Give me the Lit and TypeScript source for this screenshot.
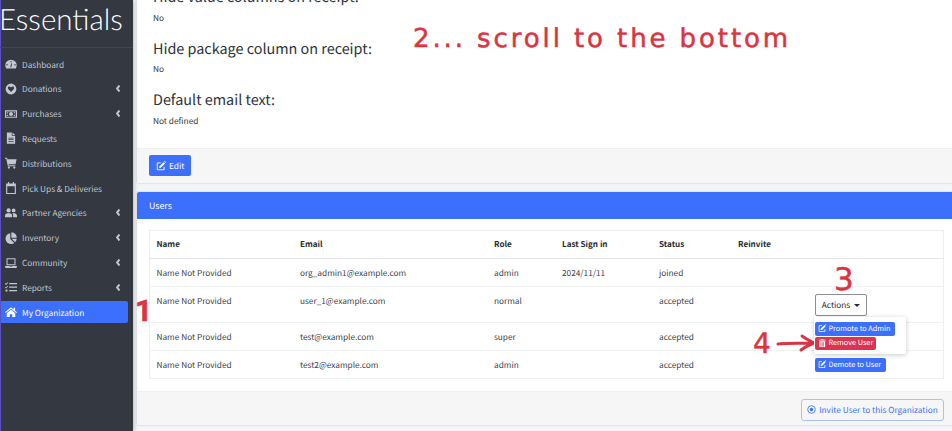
import { LitElement, html, css, svg } from "lit";
import { customElement } from "lit/decorators.js";

const ic: Record<string, any> = {
  dash: svg`<path fill-rule="evenodd" d="M8 2.2a7.6 7.6 0 0 0-7.6 7.6c0 1.4.4 2.7 1 3.8.2.3.4.4.7.4h11.800c.3 0 .5-.1.7-.4.6-1.100 1-2.400 1-3.800A7.600 7.600 0 0 0 8 2.200zM8 4a.9.9 0 1 1 0 1.800A.9.9 0 0 1 8 4zM3.500 9.100a.9.9 0 1 1 0-.1zm9.900-1a.9.9 0 1 1 0 1.800.9.9 0 0 1 0-1.800zM7 12.300 8.300 7l1 .2-.9 5.100a1.500 1.500 0 0 1-1.400 0z"/>`,
  heart: svg`<path fill-rule="evenodd" d="M8 .8a7.200 7.200 0 1 0 0 14.400A7.200 7.200 0 0 0 8 .8zM8 12 4.600 8.400c-1-1-1-2.600 0-3.400.9-.7 2.100-.5 2.800.3l.6.600.6-.6c.7-.8 1.900-1 2.800-.3 1 .8 1 2.400 0 3.400z"/>`,
  money: svg`<path fill-rule="evenodd" d="M0 3h16v10H0zm1.500 1.500v7h13v-7zM8 5.300a2.700 2.700 0 1 1 0 5.400 2.700 2.700 0 0 1 0-5.400zM2.500 5.500h2c0 1-.9 2-2 2zm9 0h2v2c-1.100 0-2-1-2-2zm-9 3c1.100 0 2 1 2 2h-2zm11 0v2h-2c0-1 .9-2 2-2z"/>`,
  file: svg`<path fill-rule="evenodd" d="M2.500 0.500h6.500v4.500h4.500v10.500h-11zM10 .5l3.500 3.500H10zM4.500 7.500v1h7v-1zm0 2.300v1h7v-1zm0 2.300v1h7v-1z"/>`,
  cart: svg`<path d="M0 1h2.800l.4 2h12.300l-1.500 6.600H4.600l.3 1.400h8.800v1.300H3.800L1.700 2.300H0z"/><circle cx="5.200" cy="14" r="1.500"/><circle cx="12.400" cy="14" r="1.500"/>`,
  cal: svg`<path fill-rule="evenodd" d="M4 0h1.500v2h5V0H12v2h2.500v14h-13V2H4zM3 5.500v9h10v-9z"/>`,
  users: svg`<circle cx="4.800" cy="4.500" r="2.800"/><circle cx="11.500" cy="4.500" r="2.500"/><path d="M0 13.500v-1.800C0 9.600 1.500 8.300 3.500 8.300h2.600c2 0 3.400 1.300 3.400 3.400v1.800zM10.800 13.500v-2.200c0-1.200-.4-2.200-1.200-3 .5-.1 1-.1 1.500-.1h1.200c2 0 3.700 1.200 3.700 3.200v2.100z"/>`,
  pie: svg`<path d="M7 1.500v7.700l5.400 5.400A7.300 7.300 0 1 1 7 1.500z"/><path d="M8.500.3A7.300 7.300 0 0 1 15.700 7.500H8.500z"/><path d="M9 9h6.700a7.300 7.300 0 0 1-2.200 4.500z"/>`,
  laptop: svg`<path fill-rule="evenodd" d="M2 1.500h12V11H2zm1.400 1.400v6.700h9.200V2.900zM0 12h6l.5.7h3l.5-.7h6v1c0 .8-.6 1.500-1.500 1.500h-13C.6 14.500 0 13.800 0 13z"/>`,
  tasks: svg`<path d="M5.500 2.500H16v1.800H5.500zM5.500 7.200H16V9H5.500zM5.500 11.900H16v1.800H5.500z"/><path d="M.5 2.800l1 1 2-2.300.8.700-2.800 3.200-1.800-1.700zM.5 7.500l1 1 2-2.300.8.700-2.800 3.200-1.800-1.700z"/><circle cx="2" cy="12.800" r="1.500"/>`,
  home: svg`<path d="M8 1.500 0 8.300l.9 1.100L8 3.500l7.100 5.900.9-1.100-2.500-2.100V2.300h-2v2.300z"/><path d="M2.300 9.800 8 5l5.700 4.800v4.700H9.700v-3.500H6.300v3.500h-4z"/>`,
};
const edit = svg`<path fill="none" stroke="currentColor" stroke-width="1.500" d="M13 9.500V14H2V3h5.500"/><path fill="currentColor" d="M5.500 8.500 12.200 1.800l2.300 2.300-6.700 6.700-2.800.5zM13 1l.6-.5c.3-.2.7-.2 1 0l1 1c.2.300.2.700 0 1l-.5.500z"/>`;
const trash = svg`<path fill="currentColor" fill-rule="evenodd" d="M5.500 0h5l.5 1.500h3.500V3h-13V1.500H5zM2.500 4h11v12h-11zM5 6v8h1.200V6zm2.400 0v8h1.200V6zm2.400 0v8H11V6z"/>`;
const circle = svg`<circle cx="8" cy="8" r="6.800" fill="none" stroke="currentColor" stroke-width="1.500"/><circle cx="8" cy="8" r="3" fill="currentColor"/>`;

const nav = [
  ["dash", "Dashboard", 0], ["heart", "Donations", 1], ["money", "Purchases", 1], ["file", "Requests", 0],
  ["cart", "Distributions", 0], ["cal", "Pick Ups & Deliveries", 0], ["users", "Partner Agencies", 1],
  ["pie", "Inventory", 1], ["laptop", "Community", 1], ["tasks", "Reports", 1], ["home", "My Organization", 0],
] as const;

const rows = [
  ["org_admin1@example.com", "admin", "2024/11/11", "joined", ""],
  ["user_1@example.com", "normal", "", "accepted", "actions"],
  ["test@example.com", "super", "", "accepted", ""],
  ["test2@example.com", "admin", "", "accepted", "demote"],
];

@customElement("app-root")
export class AppRoot extends LitElement {
  static styles = css`
    :host { display: block; width: 952px; height: 431px; overflow: hidden; position: relative; background: #f3f5f9;
      font-family: "Noto Sans CJK SC", "Noto Sans", sans-serif; font-size: 8.250px; color: #343a40; text-rendering: geometricPrecision; }
    .page { display: grid; grid-template-columns: 133px 1fr; height: 431px; }
    .side { background: #343840; border-left: 1px solid #5a50c2; color: #c2c7d0; box-sizing: border-box; position: relative; z-index: 1; box-shadow: 1px 0 4px rgba(0,0,0,.25); }
    .logo { height: 47px; border-bottom: 1px solid #41464e; color: #fff; font-family: "Lato", sans-serif;
      font-weight: 300; font-size: 29.500px; line-height: 40px; margin-left: -2px; overflow: hidden; }
    .nav { padding-top: 5px; display: flex; flex-direction: column; gap: 2.830px; }
    .item { height: 22px; width: 127px; display: flex; align-items: center; gap: 5px; padding: 0 8px 0 4px; box-sizing: border-box; border-radius: 0 2px 2px 0; }
    .item span { padding-top: 1px; }
    .item svg.i { width: 12px; height: 12px; flex: none; fill: #c2c7d0; }
    .item .c { margin-left: auto; margin-right: 0; width: 4px; height: 7px; fill: none; stroke: #c2c7d0; stroke-width: 2; }
    .item.on { background: #3c6ffb; color: #fff; }
    .item.on svg.i { fill: #fff; }
    .main { padding-left: 4px; min-width: 0; overflow: hidden; display: flex; flex-direction: column; }
    .card { background: #fff; box-shadow: 0 0 2px rgba(0,0,0,.2); }
    .top { margin-top: -13px; }
    .body { padding: 0 16px 6px; }
    .field { height: 51.500px; }
    .field h4 { margin: 0; font-weight: 400; font-size: 14.400px; line-height: 20px; color: #2c3238; }
    .field p { margin: 4.500px 0 0; line-height: 12px; font-size: 8.300px; color: #333; }
    .foot { background: #f6f6f6; border-top: 1px solid #f0f0f0; height: 35px; box-sizing: border-box; }
    .top .foot { padding: 6px 12px; }
    .btn { display: flex; align-items: center; gap: 2px; border-radius: 2px; color: #fff; background: #3c6ffb; box-sizing: border-box; white-space: nowrap; }
    .btn svg { width: 8.500px; height: 8.500px; flex: none; }
    .edit { height: 21px; width: 42px; padding: 1px 0 0 7px; font-size: 8.250px; gap: 3px; }
    .edit svg { width: 10px; height: 10px; }
    .users { margin-top: 9px; height: 233px; flex: none; display: flex; flex-direction: column; }
    .uh { height: 27px; background: #3c6ffb; color: #fff; line-height: 27px; padding-left: 12px; font-size: 8.800px; border-radius: 2px 0 0 0; }
    .ub { padding: 11px 8px 12px 12px; }
    table { width: 100%; border-collapse: collapse; table-layout: fixed; border: 1px solid #eceef0; background: #fff; }
    th, td { text-align: left; padding: 0 0 0 6.500px; font-size: 8.250px; color: #3a4046; vertical-align: top; box-sizing: border-box; }
    th { height: 28px; padding-top: 1px; font-weight: 700; font-size: 8.100px; color: #24292e; border-bottom: 1px solid #e4e6e9; vertical-align: middle; }
    td { height: 28px; padding-top: 1px; border-top: 1px solid #f0f1f3; line-height: 26px; }
    tr.tall td { height: 36px; }
    .act { position: relative; display: block; line-height: 1; }
    .actions { margin: 6px 0 0 0; padding-top: 1px; height: 22px; width: 52px; border: 1px solid #8b8f94; border-radius: 2px; display: flex; align-items: center; justify-content: center; gap: 4px; background: #fff; color: #24292e; font-size: 8.250px; box-sizing: border-box; }
    .caret { border: 3px solid transparent; border-top-color: #24292e; border-bottom: 0; width: 0; height: 0; }
    .menu { position: absolute; left: -1px; top: 23px; width: 92px; height: 37px; background: #fff; border-radius: 2px; box-shadow: 0 1px 5px rgba(0,0,0,.22); z-index: 2; }
    .menu .btn { position: absolute; left: 1px; font-size: 7.300px; padding: 1.500px 0 0 3px; line-height: 1; }
    .menu .btn svg { margin-top: -1.500px; }
    .menu .p { top: 5px; height: 14px; width: 80px; }
    .menu .r { top: 20px; height: 13px; width: 61px; background: #dc3450; }
    .d { margin-top: 6px; height: 14px; width: 71px; font-size: 7.300px; padding: 1.500px 0 0 3px; line-height: 1; }
    .d svg { margin-top: -1.500px; }
    .ufoot { padding: 7px 8px 0 0; display: flex; justify-content: flex-end; }
    .inv { height: 22px; width: 143px; border: 1px solid #a9c0f8; background: transparent; color: #3c6ffb; justify-content: center; gap: 3px; font-size: 8.300px; border-radius: 3px; }
    .inv svg { width: 9px; height: 9px; }
    .note { position: absolute; color: #dc3341; font-family: "DejaVu Sans", sans-serif; line-height: 1; white-space: nowrap; -webkit-text-stroke: .5px #dc3341; }
    .n2 { left: 413px; top: 26px; font-size: 26px; letter-spacing: 2.900px; }
    .n1 { left: 135px; top: 297px; font-size: 30px; font-weight: 700; font-family: "Roboto", sans-serif; }
    .n3 { left: 834px; top: 265px; font-size: 31px; }
    .n4 { left: 753px; top: 330px; font-size: 28px; }
    .arrow { position: absolute; left: 776px; top: 333px; width: 42px; height: 20px; fill: none; stroke: #dc3341; stroke-width: 3; stroke-linecap: round; stroke-linejoin: round; }
  `;

  render() {
    return html`
      <div class="page">
        <aside class="side">
          <div class="logo">Essentials</div>
          <div class="nav">
            ${nav.map(([i, t, c], n) => html`
              <div class="item ${n === 10 ? "on" : ""}">
                <svg class="i" viewBox="0 0 16 16">${ic[i]}</svg><span>${t}</span>
                ${c ? html`<svg class="c" viewBox="0 0 4 7"><path d="M3.500 .5 1 3.500l2.500 3"/></svg>` : ""}
              </div>`)}
          </div>
        </aside>
        <main class="main">
          <section class="card top">
            <div class="body">
              <div class="field"><h4>Hide value columns on receipt:</h4><p>No</p></div>
              <div class="field"><h4>Hide package column on receipt:</h4><p>No</p></div>
              <div class="field"><h4>Default email text:</h4><p>Not defined</p></div>
            </div>
            <div class="foot"><span class="btn edit"><svg viewBox="0 0 16 16">${edit}</svg>Edit</span></div>
          </section>
          <section class="card users">
            <div class="uh">Users</div>
            <div class="ub">
              <table>
                <colgroup><col style="width:144px"/><col style="width:194px"/><col style="width:68px"/><col style="width:97px"/><col style="width:79px"/><col style="width:77px"/><col/></colgroup>
                <thead><tr><th>Name</th><th>Email</th><th>Role</th><th>Last Sign in</th><th>Status</th><th>Reinvite</th><th></th></tr></thead>
                <tbody>
                  ${rows.map(r => html`<tr class="${r[4] === "actions" ? "tall" : ""}">
                    <td>Name Not Provided</td><td>${r[0]}</td><td>${r[1]}</td><td>${r[2]}</td><td>${r[3]}</td><td></td>
                    <td>${r[4] === "actions" ? html`<div class="act">
                        <div class="actions">Actions <span class="caret"></span></div>
                        <div class="menu">
                          <span class="btn p"><svg viewBox="0 0 16 16">${edit}</svg>Promote to Admin</span>
                          <span class="btn r"><svg viewBox="0 0 16 16">${trash}</svg>Remove User</span>
                        </div></div>` : r[4] === "demote" ? html`<span class="btn d"><svg viewBox="0 0 16 16">${edit}</svg>Demote to User</span>` : ""}</td>
                  </tr>`)}
                </tbody>
              </table>
            </div>
            <div class="foot ufoot"><span class="btn inv"><svg viewBox="0 0 16 16">${circle}</svg>Invite User to this Organization</span></div>
          </section>
        </main>
      </div>
      <div class="note n2">2... scroll to the bottom</div>
      <div class="note n1">1</div>
      <div class="note n3">3</div>
      <div class="note n4">4</div>
      <svg class="arrow" viewBox="0 0 42 20"><path d="M2 11c10-1 22-1 36-1M26 3c4 3 8 5 12 7-4 2-9 4-13 7"/></svg>
    `;
  }
}
